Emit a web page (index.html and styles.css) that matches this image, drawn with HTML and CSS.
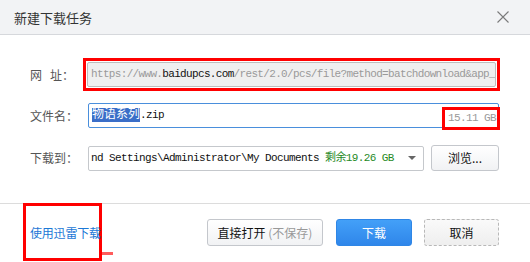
FILE: index.html
```html
<!DOCTYPE html>
<html lang="zh-CN">
<head>
<meta charset="utf-8">
<title>新建下载任务</title>
<link rel="stylesheet" href="styles.css">
</head>
<body>
<div class="dialog">
  <div class="titlebar">
    <span class="title">新建下载任务</span>
    <svg class="close" width="12" height="12" viewBox="0 0 12 12"><path d="M0.5 0.5 L11.5 11.5 M11.5 0.5 L0.5 11.5" stroke="#7a7a7a" stroke-width="1.1" fill="none"/></svg>
  </div>
  <div class="form">
    <div class="row row-url">
      <span class="label">网&nbsp;&nbsp;&nbsp;址：</span>
      <div class="mark">
        <div class="field field-url"><span class="dim">https://www.</span><span class="host">baidupcs.com</span><span class="dim">/rest/2.0/pcs/file?method=batchdownload&amp;app_</span></div>
      </div>
    </div>
    <div class="row row-name">
      <span class="label">文件名：</span>
      <div class="field field-name"><span class="sel">物语系列</span>.zip
        <span class="size">15.11 GB</span>
      </div>
    </div>
    <div class="row row-dir">
      <span class="label">下载到：</span>
      <div class="field field-dir"><span class="path">nd Settings\Administrator\My Documents <span class="free">剩余19.26 GB</span></span><span class="arrow"></span></div>
      <button class="btn btn-browse">浏览...</button>
    </div>
  </div>
  <div class="footer">
    <div class="linkbox"><a class="link">使用迅雷下载</a><span class="tick"></span></div>
    <div class="actions">
      <button class="btn btn-open">直接打开 <span class="hint">(不保存)</span></button>
      <button class="btn btn-primary">下载</button>
      <button class="btn btn-cancel">取消</button>
    </div>
  </div>
</div>
</body>
</html>
```

FILE: styles.css
```css
* { box-sizing: border-box; }
html, body { margin: 0; padding: 0; background: #fff; }
body {
  width: 530px;
  height: 262px;
  overflow: hidden;
  font-family: "Noto Sans CJK SC", "Liberation Sans", sans-serif;
  font-size: 12px;
  color: #333;
}
.dialog { width: 530px; height: 262px; display: flex; flex-direction: column; }

.titlebar {
  height: 35px;
  flex: none;
  background: #f2f3f5;
  border-bottom: 1px solid #d6d8dc;
  display: flex;
  align-items: center;
  justify-content: space-between;
  padding: 0 21px 0 14px;
}
.title { font-size: 13px; color: #333; line-height: 1; }
.close { display: block; }

.form { padding: 23px 0 0 30px; height: 168px; flex: none; }
.row { display: flex; align-items: center; }
.label { width: 58px; flex: none; color: #555; font-size: 12px; line-height: 1; }
.row-url .label { width: 53px; }
.row-name { margin-top: 12px; }
.row-dir { margin-top: 17px; }

.mark { border: 3px solid #f00; padding: 1px; width: 417px; }

.field {
  height: 25px;
  border: 1px solid #c8cbd0;
  border-radius: 2px;
  font-family: "Liberation Mono", "Noto Sans CJK SC", monospace;
  font-size: 11px;
  letter-spacing: -0.6px;
  line-height: 23px;
  white-space: nowrap;
  overflow: hidden;
  color: #111;
}
.field-url {
  background: #efefef;
  border-color: #bdbdbd;
  padding-left: 3px;
  letter-spacing: -0.66px;
}
.dim { color: #9a9a9a; }
.host { color: #111; }

.field-name {
  width: 411px;
  position: relative;
  overflow: visible;
  border-color: #4a8fdc;
  padding-left: 3px;
}
.sel {
  background: #3a6ec8;
  color: #fff;
  letter-spacing: 0;
  font-size: 12px;
}
.size {
  position: absolute;
  right: -2px;
  top: 3px;
  width: 58px;
  height: 23px;
  border: 3px solid #f00;
  color: #9a9a9a;
  line-height: 17px;
  padding-left: 3px;
  background: #fff;
}

.field-dir {
  width: 336px;
  position: relative;
  display: flex;
  align-items: center;
  border-color: #c5c8cc;
}
.path { display: block; padding-left: 2px; flex: 1; overflow: hidden; }
.free { color: #1f8a1f; }
.arrow {
  flex: none;
  width: 0; height: 0;
  border-left: 4px solid transparent;
  border-right: 4px solid transparent;
  border-top: 4px solid #666;
  margin: 0 7px 0 6px;
}

.btn {
  font-family: "Noto Sans CJK SC", "Liberation Sans", sans-serif;
  font-size: 12px;
  height: 27px;
  padding: 0;
  border: 1px solid #c4c7cc;
  border-radius: 3px;
  background: linear-gradient(#ffffff, #f1f2f4);
  color: #111;
  line-height: 1;
}
.btn-browse { width: 68px; margin-left: 7px; height: 26px; }

.footer {
  flex: 1;
  border-top: 1px solid #dcdcdc;
  display: flex;
  justify-content: space-between;
  padding: 0 31px 0 23px;
}
.linkbox {
  position: relative;
  width: 79px;
  height: 58px;
  border: 3px solid #f00;
  display: flex;
  align-items: center;
  padding-left: 4px;
  margin-top: -1px;
}
.link { color: #1c78d6; font-size: 12px; white-space: nowrap; letter-spacing: -0.2px; }
.tick {
  position: absolute;
  left: 76px;
  top: 46px;
  width: 11px;
  height: 3px;
  background: #f33;
  opacity: 0.8;
}
.actions { display: flex; gap: 12px; padding-top: 15px; }
.btn-open { width: 116px; margin-right: 1px; }
.hint { color: #999; }
.btn-primary {
  width: 76px;
  border-color: #2f86e6;
  background: linear-gradient(#43a0f8, #2f86ea);
  color: #fff;
}
.btn-cancel {
  width: 75px;
  border: 1px dashed #b8b8b8;
  background: linear-gradient(#fafafa, #eeeeee);
}
```
